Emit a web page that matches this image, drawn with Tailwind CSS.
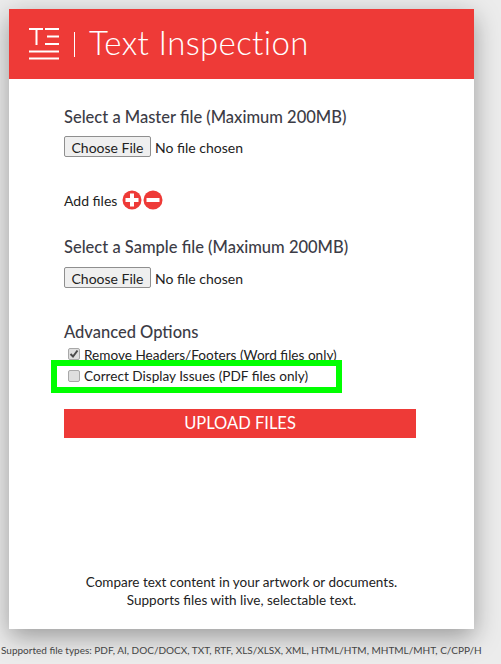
<!DOCTYPE html>
<html lang="en">
<head>
  <meta charset="UTF-8" />
  <meta name="viewport" content="width=device-width, initial-scale=1.0"/>
  <title>Text Inspection</title>
  <script src="https://cdn.jsdelivr.net/npm/@tailwindcss/browser@4"></script>
</head>
<body class="bg-[#ececec] font-['Lato',sans-serif] text-[#333] h-[664px] overflow-hidden relative">

  <div class="pt-[9px] pl-[9px]">
    <div class="w-[465px] h-[620px] bg-white shadow-[0_8px_24px_rgba(0,0,0,0.35)] flex flex-col">

      <header class="h-[70px] bg-[#ee3a37] flex items-center pl-[20px] text-white shrink-0">
        <svg width="31" height="32" viewBox="0 0 31 32" fill="none" stroke="white" stroke-width="2" class="block">
          <path d="M0 1H14M7.500 1V17M16 1H30M18 8.500H30M16 16H30M0 23.500H30M0 30.500H30"/>
        </svg>
        <div class="w-px h-[25px] bg-white ml-[14px]"></div>
        <div class="ml-[14px] pb-[3px] text-[33px] font-light leading-none tracking-[0.35px]">Text Inspection</div>
      </header>

      <main class="flex-1 flex flex-col pl-[55px]">
        <h2 class="mt-[28px] text-[16.500px] leading-[20px] font-medium text-[#3c3c46]">Select a Master file (Maximum 200MB)</h2>
        <input type="file" class="mt-[9px] block w-[300px] text-[14px] leading-[21px] text-[#222] file:w-[87px] file:h-[21px] file:mr-[4px] file:bg-[#efefef] file:border file:border-[#8f8f8f] file:rounded-[2px] file:text-[14px] file:text-[#222]" />

        <div class="mt-[31px] flex items-center h-[22px] text-[14px] text-[#222]">
          <span>Add files</span>
          <svg width="20" height="20" viewBox="0 0 20 20" class="ml-[5px] block">
            <circle cx="10" cy="10" r="9.500" fill="#ee3a37"/>
            <path d="M8 3.500H12V8H16.500V12H12V16.500H8V12H3.500V8H8Z" fill="white"/>
          </svg>
          <svg width="20" height="20" viewBox="0 0 20 20" class="ml-[1px] block">
            <circle cx="10" cy="10" r="9.500" fill="#ee3a37"/>
            <path d="M3.500 8H16.500V12H3.500Z" fill="white"/>
          </svg>
        </div>

        <h2 class="mt-[26px] text-[16.500px] leading-[20px] font-medium text-[#3c3c46]">Select a Sample file (Maximum 200MB)</h2>
        <input type="file" class="mt-[10px] block w-[300px] text-[14px] leading-[21px] text-[#222] file:w-[87px] file:h-[21px] file:mr-[4px] file:bg-[#efefef] file:border file:border-[#8f8f8f] file:rounded-[2px] file:text-[14px] file:text-[#222]" />

        <h2 class="mt-[33px] text-[16.500px] leading-[20px] font-medium text-[#3c3c46]">Advanced Options</h2>
        <label class="mt-[3px] flex items-center h-[21px] pl-[4px] text-[13.600px] text-[#222]">
          <span class="relative block w-[12px] h-[12px] -mt-[4px] mr-[4px]">
            <input type="checkbox" checked class="appearance-none block w-[12px] h-[12px] bg-[#dedede] border border-[#a8a8a8] rounded-[2px]" />
            <svg width="12" height="12" viewBox="0 0 12 12" fill="none" stroke="#4a4a4a" stroke-width="2" class="absolute left-0 top-0">
              <path d="M2.500 6L5 8.500L9.500 2.500"/>
            </svg>
          </span>
          <span>Remove Headers/Footers (Word files only)</span>
        </label>
        <label class="flex items-center h-[21px] pl-[4px] text-[13.600px] text-[#222]">
          <input type="checkbox" class="appearance-none block w-[12px] h-[12px] -mt-[2px] mr-[4px] bg-[#dedede] border border-[#a8a8a8] rounded-[2px]" />
          <span>Correct Display Issues (PDF files only)</span>
        </label>

        <button class="mt-[22px] w-[352px] h-[29px] bg-[#ee3a37] text-white text-[16.500px] text-center">UPLOAD FILES</button>

        <p class="mt-auto mb-[20px] -ml-[55px] text-center text-[13.500px] leading-[18px] text-[#222]">Compare text content in your artwork or documents.<br/>Supports files with live, selectable text.</p>
      </main>
    </div>
  </div>

  <p class="mt-[15px] pl-px text-[10px] leading-[12px] text-[#444] whitespace-nowrap">Supported file types: PDF, AI, DOC/DOCX, TXT, RTF, XLS/XLSX, XML, HTML/HTM, MHTML/MHT, C/CPP/H</p>

  <!-- green highlight over the second checkbox -->
  <div class="absolute left-[51px] top-[360px] w-[291px] h-[33px] border-[6px] border-[#00ff00] pointer-events-none"></div>
</body>
</html>
